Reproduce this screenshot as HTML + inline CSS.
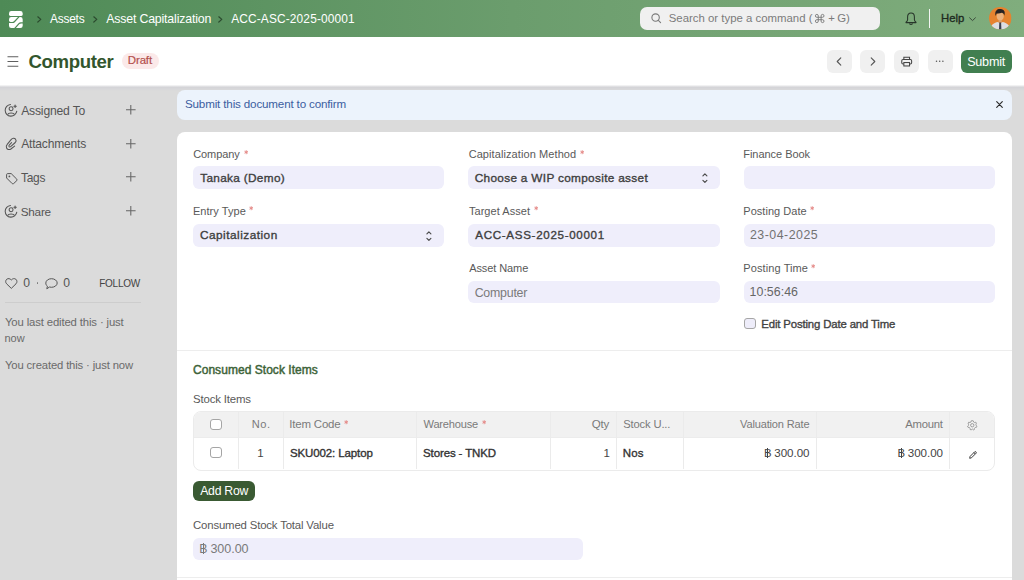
<!DOCTYPE html>
<html><head><meta charset="utf-8">
<style>
*{box-sizing:border-box;margin:0;padding:0}
html,body{width:1024px;height:580px;overflow:hidden}
body{background:#dbdbdb;font-family:"Liberation Sans",sans-serif;position:relative}
.a{position:absolute}
.t{position:absolute;white-space:nowrap;line-height:1}
svg{position:absolute;overflow:visible}
</style></head><body>
<div class="a" style="left:0;top:0;width:1024px;height:37px;background:linear-gradient(90deg,#4e8a56 0%,#6b9d6d 50%,#80ad7d 100%)"></div>
<svg style="left:9px;top:10.8px" width="13.7" height="17" viewBox="0 0 13.7 17"><g fill="#fff">
<path d="M0 2.4 Q0 0 2.4 0 H11.3 Q13.7 0 13.7 2.4 V3.6 Q13.7 4.9 12.4 4.9 H1.3 Q0 4.9 0 3.6 Z"/>
<path d="M0 8.4 Q0 6.1 2.3 6.1 H9 L4.9 10.3 Q4.2 10.9 3.2 10.9 H1.6 Q0 10.9 0 9.6 Z"/>
<path d="M10.6 6.1 H11.4 Q13.7 6.1 13.7 8.4 V11.2 H11.8 Q10.6 11.2 9.8 12.1 L5.3 17 H2.3 Q0 17 0 14.7 V12.1 H3.6 Q4.9 12.1 5.8 11.2 Z"/>
<path d="M6.9 17 L10.5 13 Q11.2 12.4 12.1 12.4 H13.7 V14.7 Q13.7 17 11.4 17 Z"/>
</g></svg>
<svg style="left:36.6px;top:16px" width="5" height="7" viewBox="0 0 5 7"><path d="M0.8 0.8 L3.8 3.4 L0.8 6" fill="none" stroke="#2b4a2e" stroke-width="1.2" stroke-linecap="round" stroke-linejoin="round"/></svg>
<div class="t" style="left:49.88px;top:13.50px;font-size:11.96px;color:#fff;letter-spacing:-0.208px;">Assets</div>
<svg style="left:92.6px;top:16px" width="5" height="7" viewBox="0 0 5 7"><path d="M0.8 0.8 L3.8 3.4 L0.8 6" fill="none" stroke="#2b4a2e" stroke-width="1.2" stroke-linecap="round" stroke-linejoin="round"/></svg>
<div class="t" style="left:106.18px;top:12.50px;font-size:12.33px;color:#fff;letter-spacing:-0.167px;">Asset Capitalization</div>
<svg style="left:217.6px;top:16px" width="5" height="7" viewBox="0 0 5 7"><path d="M0.8 0.8 L3.8 3.4 L0.8 6" fill="none" stroke="#2b4a2e" stroke-width="1.2" stroke-linecap="round" stroke-linejoin="round"/></svg>
<div class="t" style="left:231.18px;top:13.50px;font-size:11.90px;color:#fff;letter-spacing:0.150px;">ACC-ASC-2025-00001</div>
<div class="a" style="left:640px;top:7px;width:240px;height:23px;background:#f0f0f0;border-radius:7px"></div>
<svg style="left:651px;top:13px" width="11" height="11" viewBox="0 0 11 11"><circle cx="4.6" cy="4.6" r="3.7" fill="none" stroke="#7a7a7a" stroke-width="1.1"/><path d="M7.3 7.3 L9.6 9.6" stroke="#7a7a7a" stroke-width="1.1" stroke-linecap="round"/></svg>
<div class="t" style="left:668.78px;top:13.40px;font-size:11.40px;color:#7b7b7b;">Search or type a command (</div>
<svg style="left:814.6px;top:13.9px" width="9.4" height="9" viewBox="0 0 9.4 9"><path d="M3.3 3.3 V1.85 A1.45 1.45 0 1 0 1.85 3.3 H7.55 A1.45 1.45 0 1 0 6.1 1.85 V7.15 A1.45 1.45 0 1 0 7.55 5.7 H1.85 A1.45 1.45 0 1 0 3.3 7.15 Z" fill="none" stroke="#7b7b7b" stroke-width="0.95"/></svg>
<div class="t" style="left:828.15px;top:13.40px;font-size:11.40px;color:#7b7b7b;letter-spacing:-0.310px;">+ G)</div>
<svg style="left:904.5px;top:12.3px" width="12" height="13.5" viewBox="0 0 12 13.5"><path d="M6 1 C3.7 1 2.6 2.8 2.6 4.9 V7.8 C2.6 8.7 1.9 9.5 1 10.1 V10.6 H11 V10.1 C10.1 9.5 9.4 8.7 9.4 7.8 V4.9 C9.4 2.8 8.3 1 6 1 Z" fill="none" stroke="#27352a" stroke-width="1.05" stroke-linejoin="round"/><path d="M4.6 11.8 Q6 13.1 7.4 11.8" fill="none" stroke="#27352a" stroke-width="1.05" stroke-linecap="round"/></svg>
<div class="a" style="left:929px;top:9px;width:1px;height:19px;background:#f3f5f3"></div>
<div class="t" style="left:940.98px;top:13.20px;font-size:11.30px;color:#1d2a1e;letter-spacing:0.050px;-webkit-text-stroke:0.35px #1d2a1e;">Help</div>
<svg style="left:969px;top:17px" width="7" height="5" viewBox="0 0 7 5"><path d="M0.6 0.8 L3.5 3.6 L6.4 0.8" fill="none" stroke="#3a4a3b" stroke-width="1" stroke-linecap="round"/></svg>
<svg style="left:988.8px;top:6.9px" width="22.5" height="22.5" viewBox="0 0 22.5 22.5">
<defs><clipPath id="av"><circle cx="11.25" cy="11.25" r="11.25"/></clipPath></defs>
<g clip-path="url(#av)">
<rect width="22.5" height="22.5" fill="#e5832f"/>
<rect x="9.6" y="11" width="3.2" height="4.5" fill="#d9a06c"/>
<path d="M1.5 22.5 C1.8 18 3.5 16.4 8.6 14.9 L11.2 16.2 L13.8 14.9 C18.9 16.4 20.6 18 20.9 22.5 Z" fill="#dcdde2"/>
<path d="M10.3 15.6 H12.1 L12.4 22.5 H10 Z" fill="#3b3e4c"/>
<ellipse cx="11.2" cy="9.3" rx="3.5" ry="3.9" fill="#ebb27d"/>
<path d="M6.7 9 C5.9 6.8 6.1 4.6 7.4 3.4 C8.3 2.2 10 1.8 11.4 2 C13.2 1.9 14.9 2.8 15.5 4.6 C15.9 6 15.7 7.6 15.2 8.8 L14.8 6.9 C14.2 6.2 13.3 5.9 12.6 5.8 C11.4 6.6 9.4 6.7 7.6 6.5 C7.2 7.2 7 8 6.7 9 Z" fill="#262324"/>
</g></svg>
<div class="a" style="left:0;top:37px;width:1024px;height:48px;background:#fff"></div>
<div class="a" style="left:0;top:84.5px;width:1024px;height:6px;background:linear-gradient(#fafafa 0px,#d3d3d7 2.2px,#d6d6d9 3.5px,#dbdbdb 6px)"></div>
<svg style="left:7px;top:56px" width="12" height="11" viewBox="0 0 12 11"><path d="M0.5 0.8 H11.3 M0.5 5.5 H11.3 M0.5 10.2 H11.3" stroke="#5f5f5f" stroke-width="1.1"/></svg>
<div class="t" style="left:28.44px;top:53.20px;font-size:18.61px;color:#32562d;font-weight:bold;letter-spacing:-0.363px;">Computer</div>
<div class="a" style="left:122.2px;top:52.6px;width:36.6px;height:16.4px;border-radius:8.2px;background:#fbe9e9"></div>
<div class="t" style="left:127.86px;top:54.90px;font-size:11.50px;color:#b4514d;letter-spacing:-0.175px;-webkit-text-stroke:0.2px #b4514d;">Draft</div>
<div class="a" style="left:827px;top:50.4px;width:25px;height:22.2px;background:#f0f0f0;border-radius:6px"></div>
<div class="a" style="left:860.4px;top:50.4px;width:25px;height:22.2px;background:#f0f0f0;border-radius:6px"></div>
<div class="a" style="left:894px;top:50.4px;width:25px;height:22.2px;background:#f0f0f0;border-radius:6px"></div>
<div class="a" style="left:927.6px;top:50.4px;width:25px;height:22.2px;background:#f0f0f0;border-radius:6px"></div>
<svg style="left:836px;top:57px" width="6" height="9" viewBox="0 0 6 9"><path d="M4.8 0.8 L1.2 4.5 L4.8 8.2" fill="none" stroke="#555" stroke-width="1.1" stroke-linecap="round" stroke-linejoin="round"/></svg>
<svg style="left:870px;top:57px" width="6" height="9" viewBox="0 0 6 9"><path d="M1.2 0.8 L4.8 4.5 L1.2 8.2" fill="none" stroke="#555" stroke-width="1.1" stroke-linecap="round" stroke-linejoin="round"/></svg>
<svg style="left:901px;top:56px" width="11.4" height="11" viewBox="0 0 12 11"><path d="M3 3.2 V1 H9 V3.2" fill="none" stroke="#444" stroke-width="1.1"/><rect x="0.8" y="3.3" width="10.4" height="4.9" rx="1.3" fill="none" stroke="#444" stroke-width="1.1"/><rect x="3" y="6.6" width="6" height="3.6" fill="#f0f0f0" stroke="#444" stroke-width="1.1"/></svg>
<svg style="left:935px;top:59.7px" width="10" height="3" viewBox="0 0 10 3"><circle cx="1.5" cy="1.2" r="0.75" fill="#555"/><circle cx="4.7" cy="1.2" r="0.75" fill="#555"/><circle cx="7.9" cy="1.2" r="0.75" fill="#555"/></svg>
<div class="a" style="left:960.8px;top:50.4px;width:51.2px;height:22.4px;border-radius:6px;background:#417f50"></div>
<div class="t" style="left:967.13px;top:55.80px;font-size:12.62px;color:#fff;letter-spacing:-0.224px;">Submit</div>
<div class="t" style="left:21.18px;top:104.80px;font-size:12.16px;color:#555;letter-spacing:-0.189px;">Assigned To</div>
<div class="t" style="left:21.18px;top:138.20px;font-size:12.05px;color:#555;letter-spacing:-0.192px;">Attachments</div>
<div class="t" style="left:20.93px;top:171.90px;font-size:11.98px;color:#555;letter-spacing:-0.237px;">Tags</div>
<div class="t" style="left:20.67px;top:205.80px;font-size:11.74px;color:#555;letter-spacing:-0.220px;">Share</div>
<svg style="left:125.5px;top:105px" width="10" height="10" viewBox="0 0 10 10"><path d="M4.8 0 V9.4 M0 4.7 H9.6" stroke="#666" stroke-width="1.05"/></svg>
<svg style="left:125.5px;top:138.6px" width="10" height="10" viewBox="0 0 10 10"><path d="M4.8 0 V9.4 M0 4.7 H9.6" stroke="#666" stroke-width="1.05"/></svg>
<svg style="left:125.5px;top:172.3px" width="10" height="10" viewBox="0 0 10 10"><path d="M4.8 0 V9.4 M0 4.7 H9.6" stroke="#666" stroke-width="1.05"/></svg>
<svg style="left:125.5px;top:205.8px" width="10" height="10" viewBox="0 0 10 10"><path d="M4.8 0 V9.4 M0 4.7 H9.6" stroke="#666" stroke-width="1.05"/></svg>
<svg style="left:2px;top:100px" width="20" height="20" viewBox="0 0 20 20"><path d="M8.5 4.45 A5.85 5.85 0 1 0 14.8 11.2" fill="none" stroke="#555" stroke-width="1.05" stroke-linecap="round"/><circle cx="9.1" cy="8.7" r="1.95" fill="none" stroke="#555" stroke-width="1.05"/><path d="M5.6 14.5 C6.6 12.5 11.6 12.5 12.6 14.5" fill="none" stroke="#555" stroke-width="1.05"/><path d="M13.1 5 V7.4 M11.9 6.2 H14.3" stroke="#555" stroke-width="1.1" stroke-linecap="round"/></svg>
<svg style="left:2px;top:200.5px" width="20" height="20" viewBox="0 0 20 20"><path d="M8.5 4.45 A5.85 5.85 0 1 0 14.8 11.2" fill="none" stroke="#555" stroke-width="1.05" stroke-linecap="round"/><circle cx="9.1" cy="8.7" r="1.95" fill="none" stroke="#555" stroke-width="1.05"/><path d="M5.6 14.5 C6.6 12.5 11.6 12.5 12.6 14.5" fill="none" stroke="#555" stroke-width="1.05"/><path d="M13.1 5 V7.4 M11.9 6.2 H14.3" stroke="#555" stroke-width="1.1" stroke-linecap="round"/></svg>
<svg style="left:2px;top:134px" width="20" height="20" viewBox="0 0 20 20"><path d="M12.6 12.1 L8.9 15 C7.3 16.1 5.2 15.6 4.6 14 C4.1 12.9 4.3 11.3 5.2 10.3 L9.3 5.4 C10.4 4.1 12.5 3.9 13.5 5.1 C14.3 6.1 14.2 7.5 13.3 8.5 L8.6 12.7 C8.1 13.1 7.3 13 7 12.4 C6.8 11.9 7 11.3 7.4 10.9 L9.6 8.6" fill="none" stroke="#555" stroke-width="1.05" stroke-linecap="round" stroke-linejoin="round"/></svg>
<svg style="left:6px;top:172.8px" width="12" height="11" viewBox="0 0 12 11"><path d="M0.6 1.6 C0.6 1 1 0.6 1.6 0.6 H5.2 L10.8 6.2 C11.2 6.6 11.2 7.2 10.8 7.6 L7.6 10.6 C7.2 11 6.6 11 6.2 10.6 L0.6 5 Z" fill="none" stroke="#555" stroke-width="1" stroke-linejoin="round"/><circle cx="3.4" cy="3.4" r="0.9" fill="#555"/></svg>
<svg style="left:5px;top:277.5px" width="13" height="11" viewBox="0 0 13 11"><path d="M6.3 10.4 L1.6 5.8 C0.3 4.5 0.4 2.3 1.8 1.2 C3.1 0.2 5 0.5 6.3 2 C7.6 0.5 9.5 0.2 10.8 1.2 C12.2 2.3 12.3 4.5 11 5.8 Z" fill="none" stroke="#555" stroke-width="1" stroke-linejoin="round"/></svg>
<div class="t" style="left:23.33px;top:276.80px;font-size:12.20px;color:#555;">0</div>
<div class="a" style="left:36.8px;top:282.4px;width:1.3px;height:1.3px;border-radius:50%;background:#777"></div>
<svg style="left:44.6px;top:278px" width="13" height="12" viewBox="0 0 13 12"><path d="M6.5 0.7 C9.6 0.7 12.2 2.6 12.2 5 C12.2 7.4 9.6 9.3 6.5 9.3 C5.8 9.3 5.1 9.2 4.5 9 L1.8 10.8 L2.4 8.2 C1.3 7.4 0.8 6.3 0.8 5 C0.8 2.6 3.4 0.7 6.5 0.7 Z" fill="none" stroke="#555" stroke-width="1" stroke-linejoin="round"/></svg>
<div class="t" style="left:63.13px;top:276.80px;font-size:12.20px;color:#555;">0</div>
<div class="t" style="left:99.18px;top:279.20px;font-size:10.03px;color:#444;letter-spacing:-0.240px;">FOLLOW</div>
<div class="a" style="left:5px;top:301.5px;width:135.5px;height:1px;background:#cdcdcd"></div>
<div class="t" style="left:4.95px;top:317.40px;font-size:11.34px;color:#6a6a6a;letter-spacing:-0.137px;">You last edited this · just</div>
<div class="t" style="left:4.47px;top:332.90px;font-size:11.00px;color:#6a6a6a;">now</div>
<div class="t" style="left:4.95px;top:360.40px;font-size:11.29px;color:#6a6a6a;letter-spacing:-0.145px;">You created this · just now</div>
<div class="a" style="left:177px;top:89.8px;width:835px;height:30.2px;background:#ecf3fc;border-radius:8px"></div>
<div class="t" style="left:184.97px;top:98.20px;font-size:11.63px;color:#3b5da0;letter-spacing:-0.161px;">Submit this document to confirm</div>
<svg style="left:996.3px;top:100.8px" width="7" height="7" viewBox="0 0 7 7"><path d="M0.7 0.7 L6.3 6.3 M6.3 0.7 L0.7 6.3" stroke="#2a2a2a" stroke-width="1.15" stroke-linecap="round"/></svg>
<div class="a" style="left:177px;top:132px;width:835px;height:460px;background:#fff;border-radius:8px"></div>
<div class="a" style="left:177px;top:350px;width:835px;height:1px;background:#ededed"></div>
<div class="a" style="left:177px;top:577px;width:835px;height:1px;background:#ededed"></div>
<div class="t" style="left:193.14px;top:149.00px;font-size:11.00px;color:#595959;letter-spacing:-0.067px;">Company</div>
<svg style="left:244.2px;top:149.8px" width="4.4" height="4.4" viewBox="0 0 4.4 4.4"><path d="M2.2 0.2 V4.2 M0.46 1.2 L3.94 3.2 M0.46 3.2 L3.94 1.2" stroke="#e58a87" stroke-width="0.95"/></svg>
<div class="a" style="left:193.2px;top:166.3px;width:251.1px;height:22.6px;background:#efeefb;border-radius:6px"></div>
<div class="t" style="left:200.24px;top:173.10px;font-size:11.80px;color:#3e3e3e;letter-spacing:0.318px;-webkit-text-stroke:0.35px #3e3e3e;">Tanaka (Demo)</div>
<div class="t" style="left:468.64px;top:149.00px;font-size:11.00px;color:#595959;letter-spacing:0.089px;">Capitalization Method</div>
<svg style="left:580px;top:149.8px" width="4.4" height="4.4" viewBox="0 0 4.4 4.4"><path d="M2.2 0.2 V4.2 M0.46 1.2 L3.94 3.2 M0.46 3.2 L3.94 1.2" stroke="#e58a87" stroke-width="0.95"/></svg>
<div class="a" style="left:468.4px;top:166.3px;width:251.79999999999998px;height:22.6px;background:#efeefb;border-radius:6px"></div>
<div class="t" style="left:474.70px;top:173.10px;font-size:11.80px;color:#3e3e3e;letter-spacing:0.321px;-webkit-text-stroke:0.35px #3e3e3e;">Choose a WIP composite asset</div>
<svg style="left:701.6px;top:173px" width="6" height="10" viewBox="0 0 6 10"><path d="M0.9 2.9 L2.9 0.95 L4.9 2.9 M0.9 7.4 L2.9 9.35 L4.9 7.4" fill="none" stroke="#4a4a4a" stroke-width="1.15" stroke-linecap="round" stroke-linejoin="round"/></svg>
<div class="t" style="left:743.30px;top:149.00px;font-size:11.00px;color:#595959;letter-spacing:-0.044px;">Finance Book</div>
<div class="a" style="left:744.2px;top:166.3px;width:251.1px;height:22.6px;background:#efeefb;border-radius:6px"></div>
<div class="t" style="left:192.90px;top:205.60px;font-size:11.00px;color:#595959;letter-spacing:0.068px;">Entry Type</div>
<svg style="left:249.3px;top:206.4px" width="4.4" height="4.4" viewBox="0 0 4.4 4.4"><path d="M2.2 0.2 V4.2 M0.46 1.2 L3.94 3.2 M0.46 3.2 L3.94 1.2" stroke="#e58a87" stroke-width="0.95"/></svg>
<div class="a" style="left:193.2px;top:224.2px;width:251.1px;height:22.6px;background:#efeefb;border-radius:6px"></div>
<div class="t" style="left:199.90px;top:229.70px;font-size:11.80px;color:#3e3e3e;letter-spacing:0.502px;-webkit-text-stroke:0.35px #3e3e3e;">Capitalization</div>
<svg style="left:425.8px;top:230.6px" width="6" height="10" viewBox="0 0 6 10"><path d="M0.9 2.9 L2.9 0.95 L4.9 2.9 M0.9 7.4 L2.9 9.35 L4.9 7.4" fill="none" stroke="#4a4a4a" stroke-width="1.15" stroke-linecap="round" stroke-linejoin="round"/></svg>
<div class="t" style="left:468.96px;top:205.60px;font-size:11.00px;color:#595959;letter-spacing:0.044px;">Target Asset</div>
<svg style="left:533.8px;top:206.4px" width="4.4" height="4.4" viewBox="0 0 4.4 4.4"><path d="M2.2 0.2 V4.2 M0.46 1.2 L3.94 3.2 M0.46 3.2 L3.94 1.2" stroke="#e58a87" stroke-width="0.95"/></svg>
<div class="a" style="left:468.4px;top:224.2px;width:251.79999999999998px;height:22.6px;background:#efeefb;border-radius:6px"></div>
<div class="t" style="left:475.28px;top:229.20px;font-size:11.60px;color:#3e3e3e;letter-spacing:0.684px;-webkit-text-stroke:0.35px #3e3e3e;">ACC-ASS-2025-00001</div>
<div class="t" style="left:743.30px;top:205.60px;font-size:11.00px;color:#595959;letter-spacing:0.037px;">Posting Date</div>
<svg style="left:810px;top:206.4px" width="4.4" height="4.4" viewBox="0 0 4.4 4.4"><path d="M2.2 0.2 V4.2 M0.46 1.2 L3.94 3.2 M0.46 3.2 L3.94 1.2" stroke="#e58a87" stroke-width="0.95"/></svg>
<div class="a" style="left:744.2px;top:224.2px;width:251.1px;height:22.6px;background:#efeefb;border-radius:6px"></div>
<div class="t" style="left:749.88px;top:228.90px;font-size:12.40px;color:#727272;letter-spacing:0.501px;">23-04-2025</div>
<div class="t" style="left:469.18px;top:263.10px;font-size:11.00px;color:#595959;letter-spacing:-0.089px;">Asset Name</div>
<div class="a" style="left:468.4px;top:280.6px;width:251.79999999999998px;height:22.6px;background:#efeefb;border-radius:6px"></div>
<div class="t" style="left:474.67px;top:287.00px;font-size:12.36px;color:#7a7a7a;letter-spacing:-0.219px;">Computer</div>
<div class="t" style="left:743.30px;top:263.10px;font-size:11.00px;color:#595959;letter-spacing:0.100px;">Posting Time</div>
<svg style="left:811.2px;top:263.90000000000003px" width="4.4" height="4.4" viewBox="0 0 4.4 4.4"><path d="M2.2 0.2 V4.2 M0.46 1.2 L3.94 3.2 M0.46 3.2 L3.94 1.2" stroke="#e58a87" stroke-width="0.95"/></svg>
<div class="a" style="left:744.2px;top:280.6px;width:251.1px;height:22.6px;background:#efeefb;border-radius:6px"></div>
<div class="t" style="left:749.56px;top:286.40px;font-size:12.40px;color:#666;letter-spacing:0.031px;">10:56:46</div>
<div class="a" style="left:744.3px;top:318.2px;width:11.6px;height:11px;border:1px solid #a6a6a6;border-radius:3px;background:#eeedfa"></div>
<div class="t" style="left:761.27px;top:318.60px;font-size:11.40px;color:#424242;letter-spacing:-0.156px;-webkit-text-stroke:0.35px #424242;">Edit Posting Date and Time</div>
<div class="t" style="left:192.99px;top:363.80px;font-size:12.00px;color:#3d6338;letter-spacing:0.042px;-webkit-text-stroke:0.45px #3d6338;">Consumed Stock Items</div>
<div class="t" style="left:193.08px;top:393.60px;font-size:11.42px;color:#595959;letter-spacing:-0.172px;">Stock Items</div>
<div class="a" style="left:193px;top:411.2px;width:802px;height:59.4px;border:1px solid #ebebeb;border-radius:8px;overflow:hidden;background:#fff"><div style="position:absolute;left:0;top:0;right:0;height:25.8px;background:#f1f1f1;border-bottom:1px solid #ececec"></div></div>
<div class="a" style="left:238px;top:412px;width:1px;height:57px;background:#ebebeb"></div>
<div class="a" style="left:283px;top:412px;width:1px;height:57px;background:#ebebeb"></div>
<div class="a" style="left:416px;top:412px;width:1px;height:57px;background:#ebebeb"></div>
<div class="a" style="left:550px;top:412px;width:1px;height:57px;background:#ebebeb"></div>
<div class="a" style="left:616px;top:412px;width:1px;height:57px;background:#ebebeb"></div>
<div class="a" style="left:683px;top:412px;width:1px;height:57px;background:#ebebeb"></div>
<div class="a" style="left:816px;top:412px;width:1px;height:57px;background:#ebebeb"></div>
<div class="a" style="left:949px;top:412px;width:1px;height:57px;background:#ebebeb"></div>
<div class="a" style="left:210.2px;top:418.6px;width:11.6px;height:11.2px;border:1px solid #a5a5a5;border-radius:3px;background:#fff"></div>
<div class="a" style="left:210.2px;top:447.2px;width:11.6px;height:11.2px;border:1px solid #a5a5a5;border-radius:3px;background:#fff"></div>
<div class="t" style="left:251.79px;top:419.10px;font-size:11.10px;color:#7a7a7a;letter-spacing:0.475px;">No.</div>
<div class="t" style="left:289.34px;top:419.10px;font-size:11.46px;color:#7a7a7a;letter-spacing:-0.188px;">Item Code</div>
<svg style="left:344.2px;top:419.8px" width="4.4" height="4.4" viewBox="0 0 4.4 4.4"><path d="M2.2 0.2 V4.2 M0.46 1.2 L3.94 3.2 M0.46 3.2 L3.94 1.2" stroke="#e58a87" stroke-width="0.95"/></svg>
<div class="t" style="left:423.55px;top:419.10px;font-size:11.08px;color:#7a7a7a;letter-spacing:-0.201px;">Warehouse</div>
<svg style="left:481.8px;top:419.8px" width="4.4" height="4.4" viewBox="0 0 4.4 4.4"><path d="M2.2 0.2 V4.2 M0.46 1.2 L3.94 3.2 M0.46 3.2 L3.94 1.2" stroke="#e58a87" stroke-width="0.95"/></svg>
<div class="t" style="left:591.86px;top:419.10px;font-size:11.55px;color:#7a7a7a;letter-spacing:-0.250px;">Qty</div>
<div class="t" style="left:623.29px;top:419.10px;font-size:11.19px;color:#7a7a7a;letter-spacing:-0.152px;">Stock U...</div>
<div class="t" style="left:740.05px;top:419.10px;font-size:11.04px;color:#7a7a7a;letter-spacing:-0.158px;">Valuation Rate</div>
<div class="t" style="left:905.28px;top:419.10px;font-size:11.27px;color:#7a7a7a;letter-spacing:-0.228px;">Amount</div>
<svg style="left:967.3px;top:420.2px" width="10.5" height="10.5" viewBox="0 0 12 12"><path d="M6 0.7 L7.1 0.9 L7.5 2.3 L8.6 2.9 L10 2.5 L10.8 3.5 L10.2 4.9 L10.3 6.2 L11.4 7.2 L10.9 8.3 L9.4 8.5 L8.5 9.4 L8.4 10.9 L7.2 11.3 L6.1 10.3 H5.9 L4.8 11.3 L3.6 10.9 L3.5 9.4 L2.6 8.5 L1.1 8.3 L0.6 7.2 L1.7 6.2 L1.8 4.9 L1.2 3.5 L2 2.5 L3.4 2.9 L4.5 2.3 L4.9 0.9 Z" fill="none" stroke="#888" stroke-width="0.9" stroke-linejoin="round"/><circle cx="6" cy="6" r="1.9" fill="none" stroke="#888" stroke-width="0.9"/></svg>
<div class="t" style="left:257.16px;top:447.90px;font-size:11.50px;color:#444;">1</div>
<div class="t" style="left:289.88px;top:447.90px;font-size:11.50px;color:#333;letter-spacing:-0.108px;-webkit-text-stroke:0.35px #333;">SKU002: Laptop</div>
<div class="t" style="left:423.08px;top:447.90px;font-size:11.50px;color:#333;letter-spacing:-0.132px;-webkit-text-stroke:0.35px #333;">Stores - TNKD</div>
<div class="t" style="left:603.46px;top:447.90px;font-size:11.50px;color:#444;">1</div>
<div class="t" style="left:622.86px;top:447.90px;font-size:11.50px;color:#333;letter-spacing:0.050px;-webkit-text-stroke:0.35px #333;">Nos</div>
<div class="t" style="left:763.97px;top:447.90px;font-size:11.37px;color:#444;">B</div>
<div class="a" style="left:767.45px;top:447.97px;width:0.99px;height:10.21px;background:#444"></div>
<div class="t" style="left:774.26px;top:446.90px;font-size:11.60px;color:#444;letter-spacing:-0.038px;">300.00</div>
<div class="t" style="left:897.47px;top:447.90px;font-size:11.37px;color:#444;">B</div>
<div class="a" style="left:900.95px;top:447.97px;width:0.99px;height:10.21px;background:#444"></div>
<div class="t" style="left:907.76px;top:446.90px;font-size:11.60px;color:#444;letter-spacing:-0.038px;">300.00</div>
<svg style="left:969px;top:450.5px" width="8" height="8" viewBox="0 0 8 8"><path d="M0.7 7.3 L1.1 5.4 L5.6 0.9 C6 0.5 6.6 0.5 7 0.9 C7.4 1.3 7.4 1.9 7 2.3 L2.5 6.8 Z M4.9 1.6 L6.3 3" fill="none" stroke="#333" stroke-width="0.95" stroke-linejoin="round"/></svg>
<div class="a" style="left:193.3px;top:480.9px;width:61.5px;height:19.8px;border-radius:6px;background:#3a5a33"></div>
<div class="t" style="left:200.18px;top:484.70px;font-size:12.23px;color:#fff;letter-spacing:-0.238px;">Add Row</div>
<div class="t" style="left:193.02px;top:520.10px;font-size:11.40px;color:#595959;letter-spacing:-0.170px;">Consumed Stock Total Value</div>
<div class="a" style="left:193.3px;top:537.8px;width:389.5px;height:22.1px;background:#efeefb;border-radius:6px"></div>
<div class="t" style="left:199.29px;top:542.60px;font-size:12.29px;color:#7a7a7a;">B</div>
<div class="a" style="left:203.06px;top:542.94px;width:1.07px;height:11.04px;background:#7a7a7a"></div>
<div class="t" style="left:210.42px;top:542.60px;font-size:12.54px;color:#7a7a7a;letter-spacing:-0.038px;">300.00</div>
</body></html>
